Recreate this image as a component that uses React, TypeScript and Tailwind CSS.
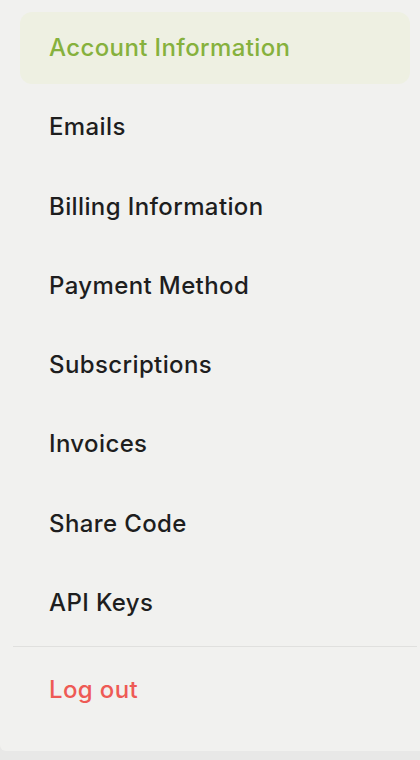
import { useState } from 'react';

const items = [
  'Account Information',
  'Emails',
  'Billing Information',
  'Payment Method',
  'Subscriptions',
  'Invoices',
  'Share Code',
  'API Keys',
];

export default function App() {
  const [active, setActive] = useState('Account Information');

  return (
    <div className="min-h-[760px] bg-[#e8e8e7]" style={{ fontFamily: 'Inter, "Noto Sans", sans-serif' }}>
      <nav className="bg-[#f1f1ef] rounded-bl-md pt-3 pb-[25px] pl-5 pr-[10px]">
        <ul className="flex flex-col gap-[7.3px]">
          {items.map((item) => {
            const isActive = item === active;
            return (
              <li key={item}>
                <button
                  onClick={() => setActive(item)}
                  className={
                    isActive
                      ? 'w-full h-[72px] flex items-center px-[29px] rounded-xl bg-[#eef0e2] text-[#86b13d] text-[24px] font-[460] tracking-[0.016em] text-left'
                      : 'w-full h-[72px] flex items-center px-[29px] rounded-xl text-[#1e1e1e] text-[24px] font-[460] tracking-[0.016em] text-left'
                  }
                >
                  {item}
                </button>
              </li>
            );
          })}
        </ul>
        {/* Divider */}
        <div className="-ml-[7px] -mr-[7px] my-[7px] border-t border-[#e0e0de]" />
        <button className="w-full h-[72px] flex items-center px-[29px] rounded-xl text-[#ee5a55] text-[24px] font-[460] tracking-[0.016em] text-left">
          Log out
        </button>
      </nav>
    </div>
  );
}
